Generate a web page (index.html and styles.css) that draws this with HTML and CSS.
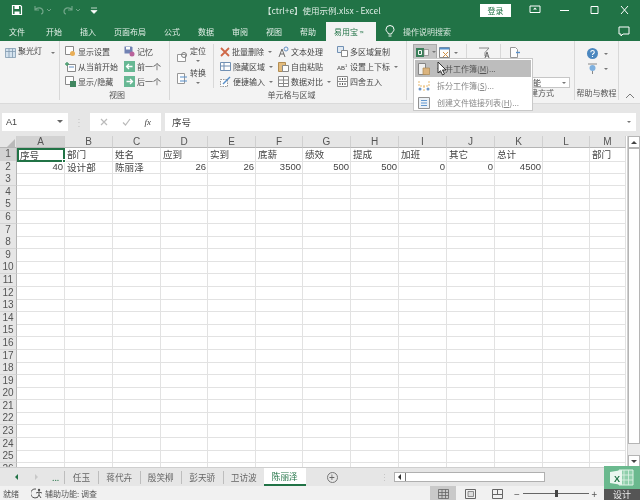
FILE: index.html
```html
<!DOCTYPE html>
<html lang="zh-CN">
<head>
    <meta charset="UTF-8">
    <title>【ctrl+e】使用示例.xlsx - Excel</title>
    <link rel="stylesheet" href="styles.css">
</head>
<body>
<div class="app">
    <div class="titlebar">
        <div class="qat">
            <svg width="12" height="12" viewBox="0 0 12 12"><path d="M1.500 1.500h8l1 1v8h-9z" fill="none" stroke="#fff" stroke-width="1.200"/><path d="M3.500 2h4.500v3H3.500zM3.500 7.500h5v3h-5z" fill="#fff"/></svg>
            <svg class="dim" width="20" height="12" viewBox="0 0 20 12"><path d="M3 2v4h4M3 6c2-3 7-3 8 1 0 2-1 3-2 3" fill="none" stroke="#fff" stroke-width="1.200"/><path d="M15 5l2 2 2-2" fill="none" stroke="#fff"/></svg>
            <svg class="dim" width="20" height="12" viewBox="0 0 20 12"><path d="M11 2v4H7M11 6C9 3 4 3 3 7c0 2 1 3 2 3" fill="none" stroke="#fff" stroke-width="1.200"/><path d="M15 5l2 2 2-2" fill="none" stroke="#fff"/></svg>
            <svg width="8" height="12" viewBox="0 0 8 12"><path d="M1 4h6M1 6.500h6l-3 3z" fill="#fff" stroke="#fff" stroke-width=".7"/></svg>
        </div>
        <div class="doc-title">【ctrl+e】使用示例.xlsx - Excel</div>
        <div class="window-btns">
            <span class="login">登录</span>
            <svg width="12" height="10" viewBox="0 0 12 10"><path d="M1 1h10v6.500H1z" fill="none" stroke="#fff"/><path d="M6 2.500l2 2H4z" fill="#fff"/></svg>
            <svg width="12" height="10" viewBox="0 0 12 10"><path d="M1 5.500h9" stroke="#fff"/></svg>
            <svg width="12" height="10" viewBox="0 0 12 10"><path d="M2 1.500h7v7H2z" fill="none" stroke="#fff"/></svg>
            <svg width="12" height="10" viewBox="0 0 12 10"><path d="M2 1l7 8M9 1L2 9" stroke="#fff"/></svg>
        </div>
    </div>

    <div class="tabs">
        <span class="tab first">文件</span>
        <span class="tab">开始</span>
        <span class="tab">插入</span>
        <span class="tab">页面布局</span>
        <span class="tab">公式</span>
        <span class="tab">数据</span>
        <span class="tab">审阅</span>
        <span class="tab">视图</span>
        <span class="tab">帮助</span>
        <span class="tab active">易用宝 <small>™</small></span>
        <svg class="bulb" width="10" height="13" viewBox="0 0 10 13"><path d="M3.500 9C3 7 1 6.500 1 4.500a4 4 0 0 1 8 0C9 6.500 7 7 6.500 9zM3.500 11h3" fill="none" stroke="#fff"/></svg>
        <span class="tab search">操作说明搜索</span>
        <svg class="comment" width="12" height="11" viewBox="0 0 12 11"><path d="M1 1h10v7H5L3 10V8H1z" fill="none" stroke="#fff"/></svg>
    </div>

    <div class="ribbon">
        <div class="group g-spot">
            <div class="group-body">
                <div class="spot">
                    <svg width="11" height="10" viewBox="0 0 11 10"><path d="M.5.500h10v9H.5zM.5 3.500h10M4 .5v9M7.500.5v9" fill="#cfe0ee" stroke="#6d8aa3" stroke-width=".8"/></svg>
                    <span>聚光灯</span><i class="caret"></i>
                </div>
            </div>
        </div>

        <div class="group g-view">
            <div class="group-body">
                <div class="col c-view1">
                    <div class="cmd"><svg width="11" height="11" viewBox="0 0 11 11"><path d="M.5.500h8v8h-8z" fill="#fff" stroke="#777"/><circle cx="7.500" cy="7.500" r="2.500" fill="#e8a33c"/></svg>显示设置</div>
                    <div class="cmd"><svg width="11" height="11" viewBox="0 0 11 11"><path d="M2.500 3.500h8v7h-8z" fill="#fff" stroke="#777"/><path d="M0 3h4M2 1v4" stroke="#2f8f5b" stroke-width="1.400"/><path d="M4 6h5" stroke="#4a7ebb"/></svg>从当前开始</div>
                    <div class="cmd"><svg width="11" height="11" viewBox="0 0 11 11"><path d="M.5.500h8v8h-8z" fill="#fff" stroke="#777"/><path d="M5 5h6v6H5z" fill="#217346"/></svg>显示/隐藏</div>
                </div>
                <div class="col">
                    <div class="cmd"><svg width="11" height="11" viewBox="0 0 11 11"><path d="M.5.500h7l1 1v6h-8z" fill="#5b6fa8"/><path d="M2 1h4v2.500H2z" fill="#fff"/><circle cx="8" cy="8" r="2.500" fill="#b04a8c"/></svg>记忆</div>
                    <div class="cmd"><svg width="11" height="11" viewBox="0 0 11 11"><path d="M0 0h11v11H0z" fill="#4fae84"/><path d="M8.500 5.500h-6M5 3L2.500 5.500 5 8" fill="none" stroke="#fff" stroke-width="1.300"/></svg>前一个</div>
                    <div class="cmd"><svg width="11" height="11" viewBox="0 0 11 11"><path d="M0 0h11v11H0z" fill="#4fae84"/><path d="M2.500 5.500h6M6 3l2.500 2.500L6 8" fill="none" stroke="#fff" stroke-width="1.300"/></svg>后一个</div>
                </div>
            </div>
            <div class="group-label">视图</div>
        </div>

        <div class="group g-cell">
            <div class="group-body">
                <div class="col c-big">
                    <div class="stack">
                        <svg width="11" height="12" viewBox="0 0 11 12"><path d="M.5 3.500h8v7h-8z" fill="#fff" stroke="#888"/><circle cx="7" cy="4" r="2.500" fill="none" stroke="#666"/></svg>
                        <span>定位<br><i class="caret"></i></span>
                    </div>
                    <div class="stack">
                        <svg width="11" height="12" viewBox="0 0 11 12"><path d="M.5.500h7v10h-7z" fill="#fff" stroke="#888"/><path d="M3 4h7M3 8h7" stroke="#3d7fc4" stroke-width="1.200"/></svg>
                        <span>转换<br><i class="caret"></i></span>
                    </div>
                </div>
                <div class="col c-cell1">
                    <div class="cmd"><svg width="10" height="11" viewBox="0 0 10 11"><path d="M1 2l8 8M9 2l-8 8" stroke="#c9502b" stroke-width="1.800"/></svg>批量删除<i class="caret"></i></div>
                    <div class="cmd"><svg width="11" height="11" viewBox="0 0 11 11"><path d="M.5 1.500h10v8H.5zM.5 5h10M4 1.500v8" fill="#fff" stroke="#5b7fa8"/></svg>隐藏区域<i class="caret"></i></div>
                    <div class="cmd"><svg width="11" height="11" viewBox="0 0 11 11"><path d="M.5 3.500h7v7h-7z" fill="#fff" stroke="#888" stroke-dasharray="1.500 1"/><path d="M3 8l7-7" stroke="#3d7fc4" stroke-width="1.500"/></svg>便捷输入<i class="caret"></i></div>
                </div>
                <div class="col c-cell2">
                    <div class="cmd"><svg width="11" height="12" viewBox="0 0 11 12"><circle cx="8" cy="3" r="2" fill="none" stroke="#4a7ebb"/><path d="M1 11L4 3l3 8M2 8h4" fill="none" stroke="#555"/></svg>文本处理</div>
                    <div class="cmd"><svg width="11" height="11" viewBox="0 0 11 11"><path d="M.5 1.500h7v9h-7z" fill="#e0b26a" stroke="#a97c36"/><path d="M4.500 4.500h6v6h-6z" fill="#fff" stroke="#777"/></svg>自由粘贴</div>
                    <div class="cmd"><svg width="11" height="11" viewBox="0 0 11 11"><path d="M.5.500h10v10H.5zM.5 4h10M.5 7.500h10M5.500.5v10" fill="#fff" stroke="#777"/></svg>数据对比<i class="caret"></i></div>
                </div>
                <div class="col">
                    <div class="cmd"><svg width="11" height="11" viewBox="0 0 11 11"><path d="M.5.500h6v6h-6z" fill="#dfe9f3" stroke="#5b7fa8"/><path d="M4.500 4.500h6v6h-6z" fill="#fff" stroke="#777"/></svg>多区域复制</div>
                    <div class="cmd"><span class="ab">AB<sup>1</sup></span>设置上下标<i class="caret"></i></div>
                    <div class="cmd"><svg width="11" height="11" viewBox="0 0 11 11"><path d="M.5.500h10v10H.5zM.5 5.500h10" fill="#fff" stroke="#777"/><path d="M3 2v2M5.500 2v2M8 2v2M3 7v2M5.500 7v2M8 7v2" stroke="#333"/></svg>四舍五入</div>
                </div>
            </div>
            <div class="group-label">单元格与区域</div>
        </div>

        <div class="group g-tools">
            <div class="group-body">
                <div class="tool-btn pressed">
                    <svg width="13" height="11" viewBox="0 0 13 11"><path d="M0 1h8v9H0z" fill="#217346"/><path d="M2.500 3.500h3v4h-3z" fill="none" stroke="#fff"/><path d="M8 2.500h4.500v6H8z" fill="#fff" stroke="#777" stroke-width=".7"/></svg><i class="caret"></i>
                </div>
                <div class="tool-btn sep">
                    <svg width="12" height="11" viewBox="0 0 12 11"><path d="M.5.500h10v10H.5z" fill="#fff" stroke="#777"/><path d="M.5.500h10v2H.5z" fill="#3d7fc4"/><path d="M4 5l5 5M9 5l-5 5" stroke="#c9802b"/></svg><i class="caret"></i>
                </div>
                <div class="tool-btn sep wide">
                    <svg width="13" height="12" viewBox="0 0 13 12"><path d="M1 1h10L7 5.500V9" fill="none" stroke="#777"/><path d="M7 11l2-6 2 6M8 9h2" fill="none" stroke="#555"/></svg>
                </div>
                <div class="tool-btn">
                    <svg width="12" height="11" viewBox="0 0 12 11"><path d="M1.500.500h5l2 2v8h-7z" fill="#fff" stroke="#888"/><path d="M7 5.500h4" stroke="#3d7fc4" stroke-width="1.400"/></svg>
                </div>
                <div class="combo"><span>智能</span><i class="caret"></i></div>
            </div>
            <div class="group-label split"><span>工作簿</span><span>创建方式</span></div>
        </div>

        <div class="group g-help">
            <div class="group-body help-body">
                <div class="cmd"><svg width="11" height="11" viewBox="0 0 11 11"><circle cx="5.500" cy="5.500" r="5.500" fill="#2e75b6"/><path d="M3.800 4.200c0-2.200 3.500-2.200 3.500 0 0 1.300-1.800 1.300-1.800 2.800M5.500 8v1" fill="none" stroke="#fff" stroke-width="1.100"/></svg><i class="caret"></i></div>
                <div class="cmd"><svg width="11" height="12" viewBox="0 0 11 12"><path d="M1 1h9M5.500 11V8" stroke="#777"/><circle cx="5.500" cy="5" r="3" fill="#6aa5dc"/></svg><i class="caret"></i></div>
            </div>
            <div class="group-label">帮助与教程</div>
        </div>

        <div class="collapse"><svg width="10" height="6" viewBox="0 0 10 6"><path d="M1 5l4-4 4 4" fill="none" stroke="#666"/></svg></div>
    </div>

    <div class="formula-zone">
        <div class="namebox"><span>A1</span><i class="caret dark"></i></div>
        <div class="dots">⋮</div>
        <div class="fx-box">
            <svg width="8" height="8" viewBox="0 0 8 8"><path d="M1 1l6 6M7 1L1 7" stroke="#bbb" stroke-width="1.200"/></svg>
            <svg width="9" height="8" viewBox="0 0 9 8"><path d="M1 4.500L3.500 7 8 1" fill="none" stroke="#bbb" stroke-width="1.200"/></svg>
            <em>fx</em>
        </div>
        <div class="formula-input"><span>序号</span><i class="caret"></i></div>
    </div>

    <div class="sheet-area">
        <div class="grid">
            <div class="row head"><div class="corner"><i></i></div><div class="on">A</div><div>B</div><div>C</div><div>D</div><div>E</div><div>F</div><div>G</div><div>H</div><div>I</div><div>J</div><div>K</div><div>L</div><div>M</div></div>
            <div class="row"><b class="on">1</b><div class="cursor-cell">序号</div><div>部门</div><div>姓名</div><div>应到</div><div>实到</div><div>底薪</div><div>绩效</div><div>提成</div><div>加班</div><div>其它</div><div>总计</div><div></div><div>部门</div></div>
            <div class="row"><b>2</b><div class="num">40</div><div>设计部</div><div>陈丽泽</div><div class="num">26</div><div class="num">26</div><div class="num">3500</div><div class="num">500</div><div class="num">500</div><div class="num">0</div><div class="num">0</div><div class="num">4500</div><div></div><div></div></div>
            <div class="row"><b>3</b><div></div><div></div><div></div><div></div><div></div><div></div><div></div><div></div><div></div><div></div><div></div><div></div><div></div></div>
            <div class="row"><b>4</b><div></div><div></div><div></div><div></div><div></div><div></div><div></div><div></div><div></div><div></div><div></div><div></div><div></div></div>
            <div class="row"><b>5</b><div></div><div></div><div></div><div></div><div></div><div></div><div></div><div></div><div></div><div></div><div></div><div></div><div></div></div>
            <div class="row"><b>6</b><div></div><div></div><div></div><div></div><div></div><div></div><div></div><div></div><div></div><div></div><div></div><div></div><div></div></div>
            <div class="row"><b>7</b><div></div><div></div><div></div><div></div><div></div><div></div><div></div><div></div><div></div><div></div><div></div><div></div><div></div></div>
            <div class="row"><b>8</b><div></div><div></div><div></div><div></div><div></div><div></div><div></div><div></div><div></div><div></div><div></div><div></div><div></div></div>
            <div class="row"><b>9</b><div></div><div></div><div></div><div></div><div></div><div></div><div></div><div></div><div></div><div></div><div></div><div></div><div></div></div>
            <div class="row"><b>10</b><div></div><div></div><div></div><div></div><div></div><div></div><div></div><div></div><div></div><div></div><div></div><div></div><div></div></div>
            <div class="row"><b>11</b><div></div><div></div><div></div><div></div><div></div><div></div><div></div><div></div><div></div><div></div><div></div><div></div><div></div></div>
            <div class="row"><b>12</b><div></div><div></div><div></div><div></div><div></div><div></div><div></div><div></div><div></div><div></div><div></div><div></div><div></div></div>
            <div class="row"><b>13</b><div></div><div></div><div></div><div></div><div></div><div></div><div></div><div></div><div></div><div></div><div></div><div></div><div></div></div>
            <div class="row"><b>14</b><div></div><div></div><div></div><div></div><div></div><div></div><div></div><div></div><div></div><div></div><div></div><div></div><div></div></div>
            <div class="row"><b>15</b><div></div><div></div><div></div><div></div><div></div><div></div><div></div><div></div><div></div><div></div><div></div><div></div><div></div></div>
            <div class="row"><b>16</b><div></div><div></div><div></div><div></div><div></div><div></div><div></div><div></div><div></div><div></div><div></div><div></div><div></div></div>
            <div class="row"><b>17</b><div></div><div></div><div></div><div></div><div></div><div></div><div></div><div></div><div></div><div></div><div></div><div></div><div></div></div>
            <div class="row"><b>18</b><div></div><div></div><div></div><div></div><div></div><div></div><div></div><div></div><div></div><div></div><div></div><div></div><div></div></div>
            <div class="row"><b>19</b><div></div><div></div><div></div><div></div><div></div><div></div><div></div><div></div><div></div><div></div><div></div><div></div><div></div></div>
            <div class="row"><b>20</b><div></div><div></div><div></div><div></div><div></div><div></div><div></div><div></div><div></div><div></div><div></div><div></div><div></div></div>
            <div class="row"><b>21</b><div></div><div></div><div></div><div></div><div></div><div></div><div></div><div></div><div></div><div></div><div></div><div></div><div></div></div>
            <div class="row"><b>22</b><div></div><div></div><div></div><div></div><div></div><div></div><div></div><div></div><div></div><div></div><div></div><div></div><div></div></div>
            <div class="row"><b>23</b><div></div><div></div><div></div><div></div><div></div><div></div><div></div><div></div><div></div><div></div><div></div><div></div><div></div></div>
            <div class="row"><b>24</b><div></div><div></div><div></div><div></div><div></div><div></div><div></div><div></div><div></div><div></div><div></div><div></div><div></div></div>
            <div class="row"><b>25</b><div></div><div></div><div></div><div></div><div></div><div></div><div></div><div></div><div></div><div></div><div></div><div></div><div></div></div>
            <div class="row"><b>26</b><div></div><div></div><div></div><div></div><div></div><div></div><div></div><div></div><div></div><div></div><div></div><div></div><div></div></div>
        </div>
        <div class="vscroll">
            <div class="arrow"><i class="up"></i></div>
            <div class="thumb"></div>
            <div class="track"></div>
            <div class="arrow"><i class="down"></i></div>
        </div>
    </div>

    <div class="sheet-tabs">
        <div class="tab-nav"><span class="nav-left"></span><span class="nav-right"></span><span class="more">...</span></div>
        <span class="sheet">任玉</span>
        <span class="sheet">蒋代卉</span>
        <span class="sheet">殷笑柳</span>
        <span class="sheet">彭天骄</span>
        <span class="sheet">卫访波</span>
        <span class="sheet current">陈丽泽</span>
        <span class="add-sheet">+</span>
        <span class="tab-dots">⋮</span>
        <div class="hscroll"><div class="hleft"><i></i></div></div>
    </div>

    <div class="statusbar">
        <span>就绪</span>
        <svg class="a11y" width="12" height="11" viewBox="0 0 12 11"><path d="M5 1a4.500 4.500 0 1 0 1 8.500" fill="none" stroke="#555"/><circle cx="8" cy="2" r="1.200" fill="#555"/><path d="M5 5l3-1 3 1M8 4v3l-2 3M8 7l2 3" fill="none" stroke="#555"/></svg>
        <span>辅助功能: 调查</span>
        <div class="views">
            <span class="view on"><svg width="11" height="10" viewBox="0 0 11 10"><path d="M.5.500h10v9H.5zM.5 3.500h10M.5 6.500h10M4 .5v9M7.500.5v9" fill="none" stroke="#666" stroke-width=".8"/></svg></span>
            <span class="view"><svg width="11" height="10" viewBox="0 0 11 10"><path d="M.5.500h10v9H.5z" fill="none" stroke="#666"/><path d="M3 2.500h5.500v5H3z" fill="#ddd" stroke="#666" stroke-width=".7"/></svg></span>
            <span class="view"><svg width="11" height="10" viewBox="0 0 11 10"><path d="M.5.500h10v9H.5zM5.500.5v5M.5 5.500h10" fill="none" stroke="#666"/></svg></span>
        </div>
        <div class="zoom-slider"><span>−</span><div class="slide-line"><i></i></div><span>+</span></div>
    </div>

    <div class="menu">
        <div class="menu-item hover">
            <svg width="12" height="12" viewBox="0 0 12 12"><path d="M.5.500h7v11h-7z" fill="#fff" stroke="#777"/><path d="M5 5h6.500v6.500H5z" fill="#e3b36f" stroke="#a97c36" stroke-width=".7"/></svg>
            <span>合并工作簿(<u>M</u>)...</span>
        </div>
        <div class="menu-item">
            <svg width="12" height="12" viewBox="0 0 12 12"><path d="M1 1v5h10V1M6 6v5" fill="none" stroke="#e3a94a" stroke-dasharray="2 1"/><circle cx="2" cy="9" r="1.500" fill="#4a7ebb"/><circle cx="10" cy="9" r="1.500" fill="#4a7ebb"/></svg>
            <span>拆分工作簿(<u>S</u>)...</span>
        </div>
        <div class="menu-item">
            <svg width="12" height="12" viewBox="0 0 12 12"><path d="M.5.500h11v11H.5z" fill="#e8eef5" stroke="#777"/><path d="M3 3.500h6M3 6h6M3 8.500h6" stroke="#3d7fc4"/></svg>
            <span>创建文件链接列表(<u>H</u>)...</span>
        </div>
    </div>
    <svg class="pointer" width="10" height="15" viewBox="0 0 10 15"><path d="M1 1v11l2.500-2.300L5.500 14l2-1-2-4h3.500z" fill="#fff" stroke="#222" stroke-width=".9"/></svg>

    <div class="logo">
        <div class="logo-top">
            <svg width="24" height="17" viewBox="0 0 24 17"><path d="M9 1h14v15H9z" fill="#8fcfab" stroke="#dff3e7"/><path d="M14 1v15M18.500 1v15M9 6h14M9 11h14" stroke="#dff3e7" stroke-width=".8"/><path d="M0 3l12-2v15L0 14z" fill="#eaf7ef"/></svg>
            <span class="logo-x">X</span>
        </div>
        <div class="logo-bottom">设计</div>
    </div>
</div>
</body>
</html>
```

FILE: styles.css
```css
body {
    margin: 0;
    padding: 0;
    font-family: "Noto Sans CJK SC", "Liberation Sans", sans-serif;
    font-size: 8px;
    color: #444;
}

.app {
    position: relative;
    display: flex;
    flex-direction: column;
    width: 640px;
    height: 500px;
    overflow: hidden;
    background-color: #e6e6e6;
    filter: blur(0.45px);
}

.caret {
    display: inline-block;
    width: 0;
    height: 0;
    margin-left: 4px;
    vertical-align: middle;
    border-left: 2px solid transparent;
    border-right: 2px solid transparent;
    border-top: 2px solid #777;
}

.caret.dark {
    border-left-width: 3px;
    border-right-width: 3px;
    border-top: 3px solid #666;
}

/* title bar */
.titlebar {
    display: flex;
    align-items: center;
    height: 20px;
    background-color: #217346;
    color: #dcebe3;
    flex: none;
}

.qat {
    display: flex;
    align-items: center;
    gap: 9px;
    width: 263px;
    padding-left: 11px;
    box-sizing: border-box;
}

.qat .dim {
    opacity: 0.35;
}

.doc-title {
    width: 137px;
    font-size: 8.500px;
    white-space: nowrap;
}

.window-btns {
    display: flex;
    align-items: center;
    flex: 1;
}

.window-btns svg {
    margin-left: 18px;
}

.login {
    width: 31px;
    height: 13px;
    margin-left: 80px;
    background-color: #fff;
    color: #217346;
    text-align: center;
    line-height: 13px;
}

/* tabs */
.tabs {
    display: flex;
    align-items: flex-end;
    height: 21px;
    padding-left: 9px;
    background-color: #217346;
    color: #e4f0e9;
    box-sizing: border-box;
    flex: none;
}

.tab {
    height: 19px;
    line-height: 20px;
    margin-right: 18px;
    white-space: nowrap;
}

.tab.first {
    margin-right: 21px;
}

.tab.active {
    width: 50px;
    margin-left: -8px;
    margin-right: 0;
    padding-left: 8px;
    box-sizing: border-box;
    background-color: #f3f3f3;
    color: #217346;
}

.tab.active small {
    font-size: 5px;
}

.bulb {
    margin: 0 8px 3px 9px;
}

.tab.search {
    margin-right: 0;
    color: #d5e6dc;
}

.comment {
    margin: 0 0 4px 167px;
}

/* ribbon */
.ribbon {
    display: flex;
    height: 62px;
    background-color: #f3f3f3;
    flex: none;
}

.ribbon svg {
    opacity: 0.85;
}

.group {
    position: relative;
    display: flex;
    flex-direction: column;
    box-sizing: border-box;
    padding-top: 3px;
    margin-bottom: 3px;
    border-right: 1px solid #d8d8d8;
}

.group-body {
    display: flex;
    flex: 1;
}

.group-label {
    height: 13px;
    line-height: 12px;
    text-align: center;
    color: #555;
}

.group-label.split {
    display: flex;
    justify-content: space-between;
    padding: 0 20px 0 2px;
}

.g-spot {
    width: 60px;
    padding-left: 5px;
}

.g-view {
    width: 110px;
    padding-left: 5px;
}

.g-cell {
    width: 237px;
    padding-left: 7px;
}

.g-tools {
    width: 168px;
    padding-left: 5px;
}

.g-help {
    width: 44px;
}

.spot {
    display: flex;
    align-items: flex-start;
    height: 15px;
    padding-top: 1px;
}

.spot svg {
    margin: 3px 2px 0 0;
}

.spot .caret {
    margin: 7px 0 0 9px;
}

.col {
    display: flex;
    flex-direction: column;
}

.c-view1 {
    width: 59px;
}

.c-big {
    width: 43px;
    background: linear-gradient(#d8d8d8, #d8d8d8) 36px 0 / 1px 44px no-repeat;
}

.c-cell1 {
    width: 58px;
}

.c-cell2 {
    width: 59px;
}

.cmd {
    display: flex;
    align-items: center;
    height: 15px;
    white-space: nowrap;
}

.cmd svg {
    margin-right: 2px;
    flex: none;
}

.cmd .caret {
    margin-left: 4px;
}

.ab {
    width: 12px;
    margin-right: 1px;
    font-family: "Liberation Sans", sans-serif;
    font-size: 6px;
}

.ab sup {
    font-size: 4px;
}

.stack {
    display: flex;
    align-items: center;
    height: 22px;
    line-height: 9px;
    text-align: center;
}

.stack svg {
    margin: 3px 2px 0 0;
}

.stack .caret {
    margin: 0;
}

.tool-btn {
    display: flex;
    align-items: center;
    width: 24px;
    height: 16px;
    padding-left: 2px;
    box-sizing: border-box;
}

.tool-btn .caret {
    margin-left: 3px;
}

.tool-btn.pressed {
    margin-left: 1px;
    background-color: #c6c6c6;
    border: 1px solid #a9a9a9;
}

.tool-btn.sep {
    width: 30px;
    border-right: 1px solid #d8d8d8;
    height: 17px;
}

.tool-btn.wide {
    width: 34px;
    padding-left: 11px;
}

.tool-btn:nth-child(4) {
    padding-left: 8px;
    width: 30px;
}

.combo {
    position: absolute;
    left: 93px;
    top: 36px;
    display: flex;
    align-items: center;
    justify-content: space-between;
    width: 70px;
    height: 11px;
    padding: 0 3px 0 24px;
    box-sizing: border-box;
    background-color: #fff;
    border: 1px solid #c6c6c6;
}

.help-body {
    flex-direction: column;
    padding: 2px 0 0 12px;
}

.collapse {
    flex: 1;
    text-align: center;
    padding-top: 49px;
}

/* formula bar */
.formula-zone {
    display: flex;
    align-items: center;
    height: 33px;
    padding: 3px 4px 0 2px;
    box-sizing: border-box;
    border-top: 1px solid #dadada;
    flex: none;
}

.namebox,
.fx-box,
.formula-input {
    display: flex;
    align-items: center;
    height: 18px;
    background-color: #fff;
    box-sizing: border-box;
}

.namebox {
    justify-content: space-between;
    width: 66px;
    padding: 0 5px 0 4px;
    font-family: "Liberation Sans", sans-serif;
    font-size: 9px;
}

.dots {
    width: 22px;
    text-align: center;
    color: #c4c4c4;
    font-size: 10px;
}

.fx-box {
    justify-content: space-around;
    width: 71px;
    padding: 0 3px;
}

.fx-box em {
    font-family: "Liberation Serif", serif;
    font-size: 9px;
}

.formula-input {
    flex: 1;
    justify-content: space-between;
    margin-left: 4px;
    padding: 0 5px 0 7px;
    font-size: 9.500px;
}

/* sheet grid */
.sheet-area {
    display: flex;
    height: 331px;
    flex: none;
}

.grid {
    width: 627px;
    overflow: hidden;
    background-color: #fff;
}

.row {
    display: grid;
    grid-template-columns: 17px 48px 48px 48px 47px 48px 47px 48px 48px 48px 48px 48px 47px 36px;
    height: 12.600px;
    font-size: 9.600px;
    line-height: 12px;
    color: #444;
}

.row > div {
    padding: 0 1px 0 2px;
    box-sizing: border-box;
    border-right: 1px solid #e2e2e2;
    border-bottom: 1px solid #e2e2e2;
    white-space: nowrap;
    overflow: hidden;
}

.row > .num {
    text-align: right;
    font-family: "Liberation Sans", sans-serif;
    font-size: 9.500px;
}

.row > b {
    font-family: "Liberation Sans", sans-serif;
    font-weight: normal;
    font-size: 10px;
    text-align: center;
    background-color: #e6e6e6;
    color: #555;
    border-right: 1px solid #b5b5b5;
    border-bottom: 1px solid #d4d4d4;
}

.row > b.on {
    background-color: #d2d2d2;
}

.row.head {
    height: 12px;
}

.row.head > div {
    padding: 0;
    text-align: center;
    font-family: "Liberation Sans", sans-serif;
    font-size: 10px;
    background-color: #e6e6e6;
    color: #555;
    border-right: 1px solid #d0d0d0;
    border-bottom: 1px solid #b5b5b5;
}

.row.head > div.on {
    background-color: #d2d2d2;
}

.corner i {
    display: block;
    width: 0;
    height: 0;
    margin: 3px 0 0 7px;
    border-left: 8px solid transparent;
    border-bottom: 8px solid #b9b9b9;
}

.row > .cursor-cell {
    position: relative;
    overflow: visible;
    border: 2px solid #217346;
    line-height: 10px;
    padding-left: 1px;
}

.cursor-cell::after {
    content: "";
    position: absolute;
    right: -3px;
    bottom: -3px;
    width: 4px;
    height: 4px;
    background-color: #217346;
    border: 1px solid #fff;
    box-sizing: border-box;
}

/* scrollbars */
.vscroll {
    display: flex;
    flex-direction: column;
    width: 13px;
    box-sizing: border-box;
    background-color: #ececec;
    border-left: 1px solid #cfcfcf;
}

.arrow {
    height: 12px;
    flex: none;
    display: flex;
    align-items: center;
    justify-content: center;
    background-color: #fff;
    border: 1px solid #b5b5b5;
    box-sizing: border-box;
}

.arrow .up {
    border-left: 3px solid transparent;
    border-right: 3px solid transparent;
    border-bottom: 3px solid #444;
}

.arrow .down {
    border-left: 3px solid transparent;
    border-right: 3px solid transparent;
    border-top: 3px solid #444;
}

.thumb {
    height: 296px;
    background-color: #fff;
    border: 1px solid #b5b5b5;
    box-sizing: border-box;
}

.track {
    flex: 1;
}

.sheet-tabs {
    display: flex;
    align-items: center;
    height: 19px;
    background-color: #e6e6e6;
    border-top: 1px solid #cfcfcf;
    box-sizing: border-box;
    font-size: 8.700px;
    color: #666;
    flex: none;
}

.tab-nav {
    display: flex;
    align-items: center;
    width: 64px;
    height: 100%;
    padding-left: 15px;
    box-sizing: border-box;
}

.nav-left {
    border-top: 3px solid transparent;
    border-bottom: 3px solid transparent;
    border-right: 3px solid #217346;
}

.nav-right {
    margin-left: 17px;
    border-top: 3px solid transparent;
    border-bottom: 3px solid transparent;
    border-left: 3px solid #c8c8c8;
}

.more {
    margin-left: 14px;
    color: #217346;
}

.sheet {
    width: 41.500px;
    height: 13px;
    line-height: 13px;
    text-align: center;
    border-left: 1px solid #bdbdbd;
    box-sizing: border-box;
}

.sheet:nth-child(2) {
    width: 34px;
}

.sheet.current {
    height: 18px;
    line-height: 17px;
    align-self: flex-start;
    background-color: #fff;
    color: #217346;
    border-left: 0;
    border-bottom: 2px solid #217346;
}

.add-sheet {
    width: 11px;
    height: 11px;
    margin-left: 21px;
    border: 1px solid #777;
    border-radius: 50%;
    text-align: center;
    line-height: 10px;
    font-family: "Liberation Sans", sans-serif;
    font-size: 10px;
    box-sizing: border-box;
    color: #666;
}

.tab-dots {
    margin-left: 42px;
    color: #c4c4c4;
}

.hscroll {
    width: 151px;
    height: 10px;
    margin-left: 5px;
    background-color: #fff;
    border: 1px solid #b0b0b0;
    box-sizing: border-box;
}

.hleft {
    width: 10px;
    height: 100%;
    display: flex;
    align-items: center;
    justify-content: center;
    border-right: 1px solid #777;
}

.hleft i {
    border-top: 3px solid transparent;
    border-bottom: 3px solid transparent;
    border-right: 3px solid #333;
}

.statusbar {
    display: flex;
    align-items: center;
    flex: 1;
    padding-left: 3px;
    background-color: #f1f1f1;
    color: #555;
}

.a11y {
    margin: 0 2px 0 12px;
}

.views {
    display: flex;
    margin-left: 333px;
    height: 100%;
}

.view {
    display: flex;
    align-items: center;
    justify-content: center;
    width: 26px;
    height: 100%;
    margin-right: 1px;
}

.view.on {
    background-color: #c9c9c9;
}

.zoom-slider {
    display: flex;
    align-items: center;
    gap: 3px;
    margin-left: 3px;
    font-size: 10px;
}

.slide-line {
    position: relative;
    width: 66px;
    height: 1px;
    background-color: #666;
}

.slide-line i {
    position: absolute;
    left: 32px;
    top: -3px;
    width: 3px;
    height: 7px;
    background-color: #444;
}

/* dropdown over the ribbon */
.menu {
    position: absolute;
    left: 413px;
    top: 58px;
    width: 120px;
    height: 53px;
    padding: 1px;
    box-sizing: border-box;
    background-color: #fff;
    border: 1px solid #c8c8c8;
    color: #888;
}

.menu svg {
    opacity: 0.8;
}

.menu-item {
    display: flex;
    align-items: center;
    height: 17px;
    padding-left: 3px;
}

.menu-item span {
    margin-left: 7px;
    white-space: nowrap;
}

.menu-item.hover {
    background-color: #bdbdbd;
    color: #555;
}

.pointer {
    position: absolute;
    left: 437px;
    top: 61px;
}

/* watermark in the corner */
.logo {
    position: absolute;
    right: 0;
    bottom: 0;
    width: 36px;
    height: 34px;
}

.logo-top {
    position: relative;
    display: flex;
    justify-content: center;
    align-items: center;
    height: 23px;
    background-color: #6ab98e;
}

.logo-x {
    position: absolute;
    left: 10px;
    top: 8px;
    font-family: "Liberation Sans", sans-serif;
    font-size: 9px;
    font-weight: bold;
    color: #217346;
}

.logo-bottom {
    height: 11px;
    background-color: #555;
    color: #eee;
    text-align: center;
    line-height: 11px;
    font-size: 9px;
}
```
